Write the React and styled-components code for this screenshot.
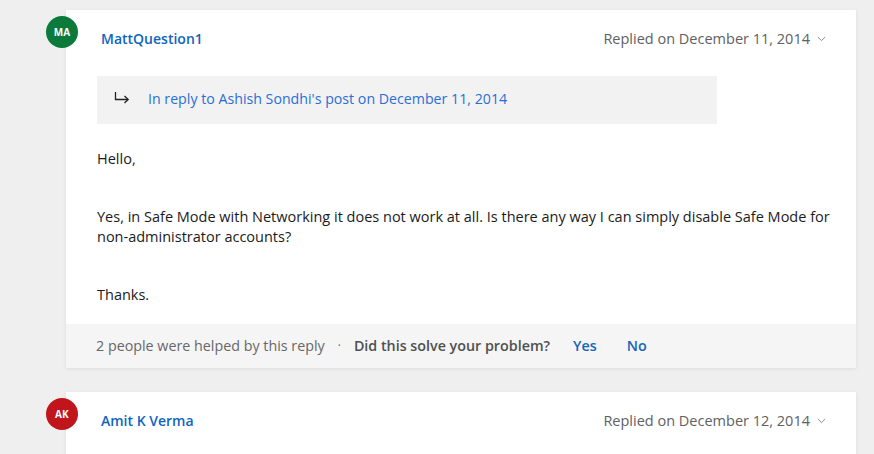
import React from "react";
import styled, { createGlobalStyle } from "styled-components";

const Global = createGlobalStyle`
  html, body { margin: 0; padding: 0; background: #efefef; }
  body { font-family: "Open Sans", "Noto Sans", sans-serif; -webkit-font-smoothing: antialiased; }
  * { box-sizing: border-box; }
`;

const Page = styled.div`
  padding: 10px 18px 0 66px;
  display: flex;
  flex-direction: column;
  gap: 24px;
`;

const Card = styled.article`
  position: relative;
  background: #fff;
  box-shadow: 0 1px 4px rgba(0, 0, 0, 0.08);
`;

const Avatar = styled.div`
  position: absolute;
  left: -20px;
  top: 6px;
  width: 32px;
  height: 32px;
  border-radius: 50%;
  background: ${(p) => p.$bg};
  color: #fff;
  font-size: 10px;
  font-weight: 700;
  display: flex;
  align-items: center;
  justify-content: center;
  letter-spacing: 0.2px;
`;

const Header = styled.header`
  display: flex;
  align-items: center;
  justify-content: space-between;
  padding: 18px 30px 0 35px;
  height: 39px;
`;

const Name = styled.a`
  color: #0f64be;
  font-size: 14px;
  font-weight: 600;
  text-decoration: none;
`;

const DateBox = styled.div`
  display: flex;
  align-items: center;
  gap: 7px;
  color: #616161;
  font-size: 14.5px;
`;

const Content = styled.div`
  padding: 27px 18px 19px 31px;
`;

const ReplyBox = styled.div`
  width: 620px;
  height: 48px;
  background: #f2f2f2;
  display: flex;
  align-items: center;
  padding: 0 0 4px 17px;
  gap: 18px;
  margin-bottom: 25px;
`;

const ReplyLink = styled.a`
  color: #2a6fd6;
  font-size: 14.2px;
  text-decoration: none;
`;

const Para = styled.p`
  margin: 0 0 38px;
  color: #1b1b1b;
  font-size: 14.5px;
  line-height: 20px;
  &:last-child { margin-bottom: 0; }
`;

const Footer = styled.footer`
  height: 44px;
  background: #f5f5f5;
  display: flex;
  align-items: center;
  padding: 0 0 1px 30px;
  font-size: 14.3px;
  color: #686868;
`;

const Dot = styled.span`
  margin: 0 13px 0 13px;
  font-size: 12px;
`;

const Question = styled.span`
  font-weight: 600;
  color: #505050;
`;

const Vote = styled.button`
  background: none;
  border: none;
  padding: 0;
  margin-left: ${(p) => p.$ml}px;
  font-family: inherit;
  font-size: 14.3px;
  font-weight: 600;
  color: #1664b8;
  cursor: pointer;
`;

const Chevron = () => (
  <svg width="9" height="6" viewBox="0 0 9 6">
    <path d="M0.8 1 L4.5 4.6 L8.2 1" fill="none" stroke="#8a8a8a" strokeWidth="1" />
  </svg>
);

const ReplyArrow = () => (
  <svg width="16" height="14" viewBox="0 0 16 14">
    <path d="M1.5 1 V8.5 H14" fill="none" stroke="#222" strokeWidth="1.3" />
    <path d="M10.5 5 L14.2 8.5 L10.5 12" fill="none" stroke="#222" strokeWidth="1.3" />
  </svg>
);

export default function App() {
  return (
    <>
      <Global />
      <Page>
        <Card>
          <Avatar $bg="#0c7a3a">MA</Avatar>
          <Header>
            <Name href="#">MattQuestion1</Name>
            <DateBox>
              Replied on December 11, 2014 <Chevron />
            </DateBox>
          </Header>
          <Content>
            <ReplyBox>
              <ReplyArrow />
              <ReplyLink href="#">In reply to Ashish Sondhi's post on December 11, 2014</ReplyLink>
            </ReplyBox>
            <Para>Hello,</Para>
            <Para>
              Yes, in Safe Mode with Networking it does not work at all. Is there any way I can simply disable Safe Mode for
              non-administrator accounts?
            </Para>
            <Para>Thanks.</Para>
          </Content>
          <Footer>
            2 people were helped by this reply
            <Dot>·</Dot>
            <Question>Did this solve your problem?</Question>
            <Vote $ml={23}>Yes</Vote>
            <Vote $ml={30}>No</Vote>
          </Footer>
        </Card>
        <Card>
          <Avatar $bg="#c1151c">AK</Avatar>
          <Header>
            <Name href="#">Amit K Verma</Name>
            <DateBox>
              Replied on December 12, 2014 <Chevron />
            </DateBox>
          </Header>
          <Content>
            <Para>&nbsp;</Para>
          </Content>
        </Card>
      </Page>
    </>
  );
}
